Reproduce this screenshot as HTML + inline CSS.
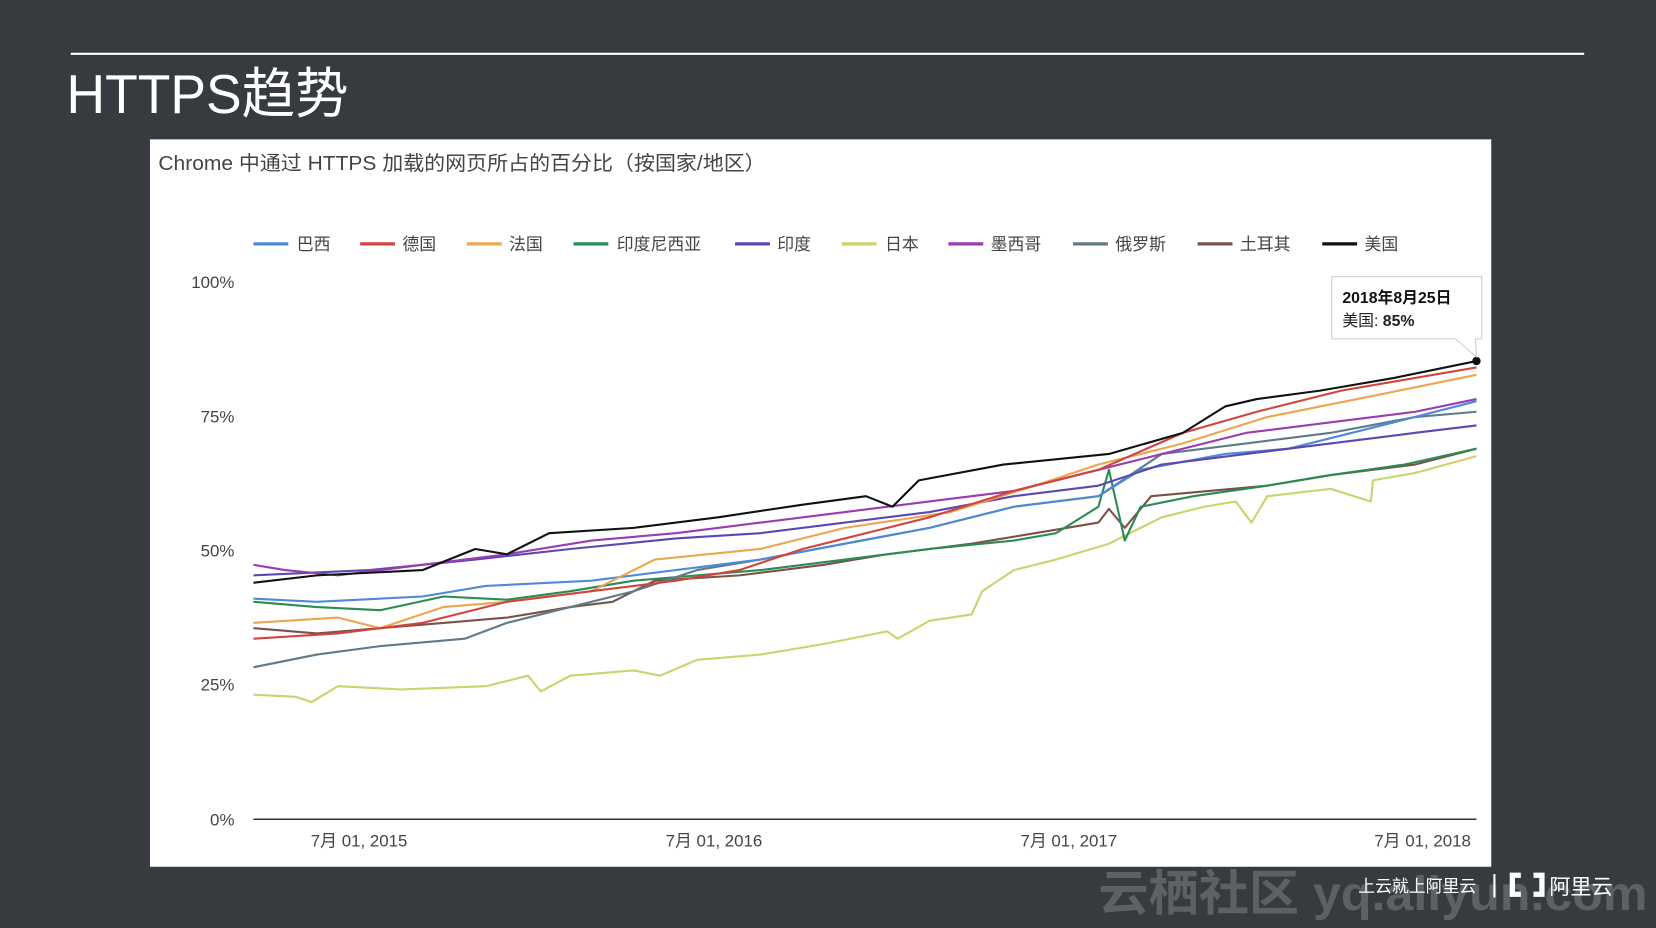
<!DOCTYPE html>
<html><head><meta charset="utf-8"><style>
html,body{margin:0;padding:0;background:#373b40;width:1656px;height:928px;overflow:hidden}
svg{display:block}
text{font-family:"Liberation Sans","Noto Sans CJK SC",sans-serif}
</style></head><body>
<svg width="1656" height="928" viewBox="0 0 1568 879" preserveAspectRatio="none">
<rect width="1568" height="879" fill="#373b40"/>
<line x1="67" y1="51" x2="1500" y2="51" stroke="#fff" stroke-width="2"/>
<text x="63" y="107" font-size="52" fill="#fff" textLength="267" lengthAdjust="spacingAndGlyphs">HTTPS趋势</text>
<text x="1040" y="862" font-size="46" fill="#5d6166" font-weight="bold" textLength="520" lengthAdjust="spacingAndGlyphs">云栖社区 yq.aliyun.com</text>
<rect x="142" y="132" width="1270" height="689" fill="#fff"/>
<text x="150" y="161" font-size="19" fill="#444" textLength="575" lengthAdjust="spacingAndGlyphs">Chrome 中通过 HTTPS 加载的网页所占的百分比（按国家/地区）</text>
<g font-size="16" fill="#444">
<line x1="240" y1="231" x2="273" y2="231" stroke="#4e8ad6" stroke-width="3"/><text x="281" y="237">巴西</text>
<line x1="341" y1="231" x2="374" y2="231" stroke="#d2453f" stroke-width="3"/><text x="381" y="237">德国</text>
<line x1="442" y1="231" x2="475" y2="231" stroke="#eba64f" stroke-width="3"/><text x="482" y="237">法国</text>
<line x1="543" y1="231" x2="576" y2="231" stroke="#2a8c55" stroke-width="3"/><text x="584" y="237">印度尼西亚</text>
<line x1="696" y1="231" x2="729" y2="231" stroke="#5b48b0" stroke-width="3"/><text x="736" y="237">印度</text>
<line x1="797" y1="231" x2="830" y2="231" stroke="#c6d66b" stroke-width="3"/><text x="838" y="237">日本</text>
<line x1="898" y1="231" x2="931" y2="231" stroke="#9c3bb0" stroke-width="3"/><text x="938" y="237">墨西哥</text>
<line x1="1016" y1="231" x2="1049" y2="231" stroke="#5f7a8a" stroke-width="3"/><text x="1056" y="237">俄罗斯</text>
<line x1="1134" y1="231" x2="1167" y2="231" stroke="#7b5248" stroke-width="3"/><text x="1174" y="237">土耳其</text>
<line x1="1252" y1="231" x2="1285" y2="231" stroke="#111" stroke-width="3"/><text x="1292" y="237">美国</text>
</g>
<g font-size="16" fill="#444" text-anchor="end">
<text x="222" y="273">100%</text><text x="222" y="400">75%</text><text x="222" y="527">50%</text><text x="222" y="654">25%</text><text x="222" y="782">0%</text>
</g>
<g font-size="16" fill="#444" text-anchor="middle">
<text x="340" y="802">7月 01, 2015</text><text x="676" y="802">7月 01, 2016</text><text x="1012" y="802">7月 01, 2017</text><text x="1347" y="802">7月 01, 2018</text>
</g>
<line x1="240" y1="776" x2="1398" y2="776" stroke="#333" stroke-width="1.5"/>
<g fill="none" stroke-width="2" stroke-linejoin="round">
<polyline stroke="#c6d66b" points="240,658 280,660 295,665 320,650 380,653 460,650 500,640 512,655 540,640 600,635 625,640 660,625 720,620 780,610 840,598 850,605 880,588 920,582 930,560 960,540 1000,530 1050,515 1080,500 1100,490 1140,480 1170,475 1185,495 1200,470 1260,463 1298,475 1300,455 1340,448 1398,432"/>
<polyline stroke="#7b5248" points="240,595 300,600 360,595 420,590 480,585 540,575 580,570 620,550 700,545 780,535 840,525 920,515 980,505 1040,495 1050,482 1065,500 1090,470 1200,460 1260,450 1340,440 1398,425"/>
<polyline stroke="#2a8c55" points="240,570 300,575 360,578 420,565 480,568 540,560 600,550 660,545 720,540 800,530 880,520 960,512 1000,505 1040,480 1050,445 1065,512 1080,480 1130,470 1200,460 1260,450 1330,440 1398,425"/>
<polyline stroke="#5f7a8a" points="240,632 300,620 360,612 440,605 480,590 520,580 600,560 660,540 720,530 800,515 880,500 960,480 1040,470 1100,430 1180,420 1260,410 1340,395 1398,390"/>
<polyline stroke="#4e8ad6" points="240,567 300,570 400,565 460,555 560,550 640,540 720,530 800,515 880,500 960,480 1040,470 1080,445 1160,430 1220,425 1320,400 1398,380"/>
<polyline stroke="#5b48b0" points="240,545 350,540 450,530 540,520 640,510 720,505 800,495 880,485 960,470 1040,460 1100,440 1180,430 1260,420 1340,410 1398,403"/>
<polyline stroke="#9c3bb0" points="240,535 270,540 320,545 400,535 480,525 560,512 640,505 720,495 800,485 880,475 960,465 1040,445 1100,430 1180,410 1260,400 1340,390 1398,378"/>
<polyline stroke="#eba64f" points="240,590 320,585 360,595 420,575 480,570 560,560 620,530 720,520 800,500 900,485 980,460 1040,440 1120,420 1200,395 1300,375 1398,355"/>
<polyline stroke="#d2453f" points="240,605 320,600 400,590 480,570 560,560 640,550 700,540 760,520 800,510 880,490 960,465 1040,445 1120,410 1190,390 1270,370 1398,348"/>
<polyline stroke="#111" points="240,552 300,545 400,540 450,520 480,525 520,505 600,500 680,490 760,478 820,470 845,480 870,455 950,440 1050,430 1120,410 1160,385 1190,378 1250,370 1320,358 1398,342"/>
</g>
<circle cx="1398" cy="342" r="4" fill="#111"/>
<path d="M1261,262 H1403 V321 H1397 L1398,338 L1378,321 H1261 Z" fill="#fff" stroke="#ccc"/>
<text x="1271" y="287" font-size="15" font-weight="bold" fill="#111">2018年8月25日</text>
<text x="1271" y="309" font-size="15" fill="#222">美国: <tspan font-weight="bold">85%</tspan></text>
<text x="1286" y="845" font-size="16" fill="#fff">上云就上阿里云</text>
<line x1="1415" y1="828" x2="1415" y2="850" stroke="#fff" stroke-width="2"/>
<path d="M1440,829 h-8 v18 h8 M1452,829 h8 v18 h-8" fill="none" stroke="#fff" stroke-width="5"/>
<text x="1467" y="847" font-size="20" fill="#fff">阿里云</text>
</svg>
</body></html>
